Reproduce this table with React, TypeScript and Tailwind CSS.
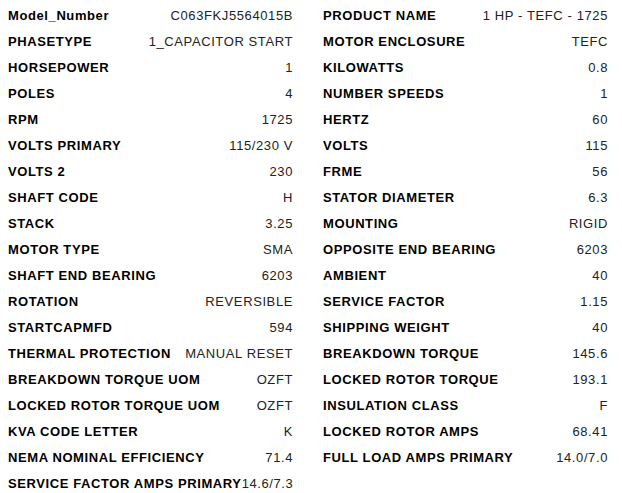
const left: [string, string][] = [
  ["Model_Number", "C063FKJ5564015B"],
  ["PHASETYPE", "1_CAPACITOR START"],
  ["HORSEPOWER", "1"],
  ["POLES", "4"],
  ["RPM", "1725"],
  ["VOLTS PRIMARY", "115/230 V"],
  ["VOLTS 2", "230"],
  ["SHAFT CODE", "H"],
  ["STACK", "3.25"],
  ["MOTOR TYPE", "SMA"],
  ["SHAFT END BEARING", "6203"],
  ["ROTATION", "REVERSIBLE"],
  ["STARTCAPMFD", "594"],
  ["THERMAL PROTECTION", "MANUAL RESET"],
  ["BREAKDOWN TORQUE UOM", "OZFT"],
  ["LOCKED ROTOR TORQUE UOM", "OZFT"],
  ["KVA CODE LETTER", "K"],
  ["NEMA NOMINAL EFFICIENCY", "71.4"],
  ["SERVICE FACTOR AMPS PRIMARY", "14.6/7.3"],
];

const right: [string, string][] = [
  ["PRODUCT NAME", "1 HP - TEFC - 1725"],
  ["MOTOR ENCLOSURE", "TEFC"],
  ["KILOWATTS", "0.8"],
  ["NUMBER SPEEDS", "1"],
  ["HERTZ", "60"],
  ["VOLTS", "115"],
  ["FRME", "56"],
  ["STATOR DIAMETER", "6.3"],
  ["MOUNTING", "RIGID"],
  ["OPPOSITE END BEARING", "6203"],
  ["AMBIENT", "40"],
  ["SERVICE FACTOR", "1.15"],
  ["SHIPPING WEIGHT", "40"],
  ["BREAKDOWN TORQUE", "145.6"],
  ["LOCKED ROTOR TORQUE", "193.1"],
  ["INSULATION CLASS", "F"],
  ["LOCKED ROTOR AMPS", "68.41"],
  ["FULL LOAD AMPS PRIMARY", "14.0/7.0"],
];

function SpecList({ rows }: { rows: [string, string][] }) {
  return (
    <div className="flex flex-col">
      {rows.map(([label, value]) => (
        <div key={label} className="flex h-[26px] items-center justify-between whitespace-nowrap leading-[26px]">
          <span className="font-bold text-black">{label}</span>
          <span className="text-[#222]">{value}</span>
        </div>
      ))}
    </div>
  );
}

export default function App() {
  return (
    <div className="min-h-[493px] w-[622px] bg-white pl-[8px] pt-[3px] font-['Liberation_Sans',Arial,sans-serif] text-[13px] tracking-[0.6px]">
      <div className="grid grid-cols-[285px_285px] gap-x-[30px]">
        <SpecList rows={left} />
        <SpecList rows={right} />
      </div>
    </div>
  );
}
